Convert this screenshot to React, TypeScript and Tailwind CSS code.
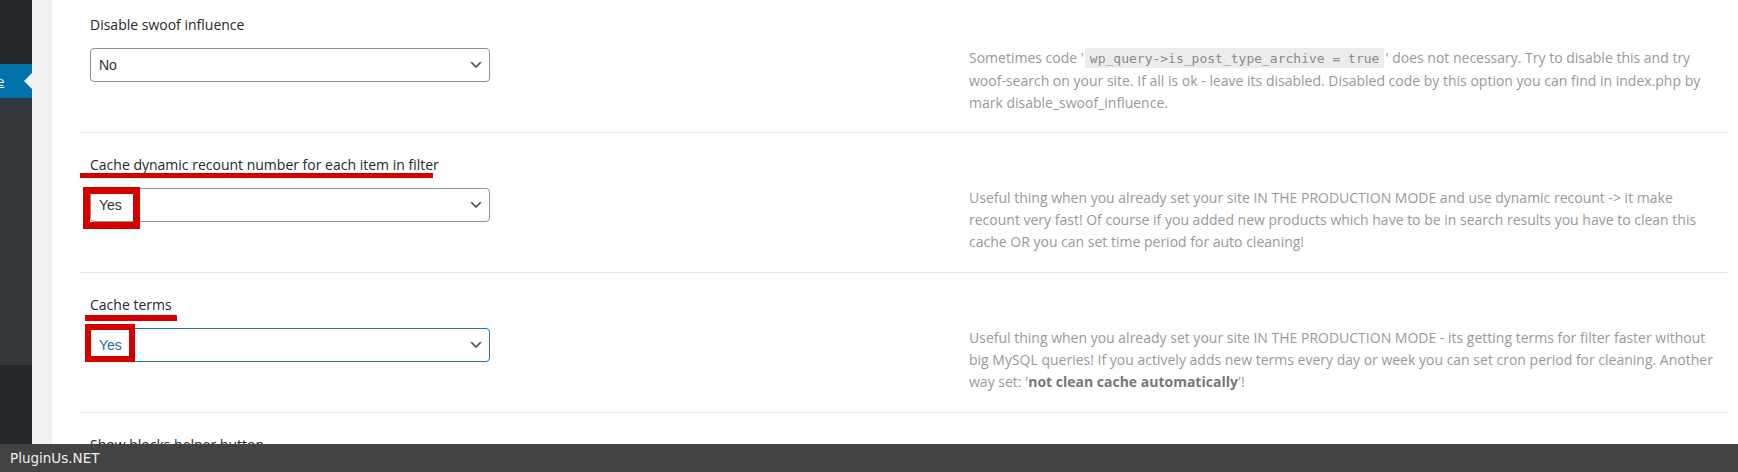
import React from 'react';

const Chevron = () => (
    <svg viewBox="0 0 20 20" className="absolute right-[5px] top-1/2 h-4 w-4 -translate-y-1/2" fill="#50575e">
        <path d="M5 6l5 5 5-5 2 1-7 7-7-7 2-1z" />
    </svg>
);

interface SelectProps {
    value: string;
    focused?: boolean;
}

const FakeSelect: React.FC<SelectProps> = ({ value, focused }) => (
    <div
        className={
            focused
                ? 'relative flex h-[34px] w-[400px] items-center rounded-[4px] border border-[#2271b1] bg-white pl-[8px] text-[14px] text-[#1f6ea8]'
                : 'relative flex h-[34px] w-[400px] items-center rounded-[4px] border border-[#8c8f94] bg-white pl-[8px] text-[14px] text-[#2c3338]'
        }
        style={{ fontFamily: '"Liberation Sans", Arial, sans-serif' }}
    >
        {value}
        <Chevron />
    </div>
);

interface RowProps {
    label: string;
    value: string;
    focused?: boolean;
    height?: string;
    children?: React.ReactNode;
    overlay?: React.ReactNode;
}

const Row: React.FC<RowProps> = ({ label, value, focused, height = 'h-[140px]', children, overlay }) => (
    <div className={`relative flex shrink-0 border-t border-[#e4e6e9] ${height}`}>
        <div className="w-[889px] shrink-0 pl-[10px] pt-[22px]">
            <div className="text-[14px] font-medium leading-[20px] text-[#23282d]">{label}</div>
            <div className="mt-[13px]">
                <FakeSelect value={value} focused={focused} />
            </div>
        </div>
        <div className="pt-[54px] text-[14px] leading-[22px] text-[#999999]">{children}</div>
        {overlay}
    </div>
);

export default function App() {
    return (
        <div
            className="relative flex h-[472px] w-[1738px] overflow-hidden bg-white"
            style={{ fontFamily: '"Open Sans", "Noto Sans", sans-serif' }}
        >
            {/* admin menu */}
            <div className="flex w-[32px] shrink-0 flex-col">
                <div className="h-[64px] bg-[#23282d]" />
                <div className="relative flex h-[34px] items-center overflow-hidden bg-[#0073aa]">
                    <span className="-ml-[3px] text-[13px] leading-none text-white underline">e</span>
                    <span className="absolute right-0 top-1/2 h-0 w-0 -translate-y-1/2 border-y-[8px] border-r-[8px] border-y-transparent border-r-[#f1f1f1]" />
                </div>
                <div className="h-[267px] bg-[#32373c]" />
                <div className="flex-1 bg-[#23282d]" />
            </div>
            <div className="w-[20px] shrink-0 bg-[#f1f1f1]" />

            {/* settings */}
            <div className="flex flex-1 flex-col pl-[28px] pr-[11px]">
                <div className="-mt-[8px] flex flex-col">
                    <Row label="Disable swoof influence" value="No">
                        <div className="whitespace-nowrap">
                            Sometimes code '
                            <code
                                className="mx-[1px] bg-[#ececec] px-[5px] pb-[2px] pt-[3px] text-[13px] text-[#8a8a8a]"
                                style={{ fontFamily: '"DejaVu Sans Mono", monospace' }}
                            >
                                wp_query-&gt;is_post_type_archive = true
                            </code>
                            ' does not necessary. Try to disable this and try
                            <br />
                            woof-search on your site. If all is ok - leave its disabled. Disabled code by this option you can find in index.php by
                            <br />
                            mark disable_swoof_influence.
                        </div>
                    </Row>

                    <Row
                        label="Cache dynamic recount number for each item in filter"
                        value="Yes"
                        overlay={
                            <>
                                <div className="absolute left-0 top-[40px] h-[5px] w-[353px] bg-[#d40000]" />
                                <div className="absolute left-[3px] top-[54px] h-[42px] w-[57px] border-[7px] border-[#d40000]" />
                            </>
                        }
                    >
                        <div className="whitespace-nowrap">
                            Useful thing when you already set your site IN THE PRODUCTION MODE and use dynamic recount -&gt; it make
                            <br />
                            recount very fast! Of course if you added new products which have to be in search results you have to clean this
                            <br />
                            cache OR you can set time period for auto cleaning!
                        </div>
                    </Row>

                    <Row
                        label="Cache terms"
                        value="Yes"
                        focused
                        overlay={
                            <>
                                <div className="absolute left-[5px] top-[42px] h-[6px] w-[92px] bg-[#d40000]" />
                                <div className="absolute left-[5px] top-[51px] h-[38px] w-[50px] border-[6px] border-[#d40000]" />
                            </>
                        }
                    >
                        <div className="whitespace-nowrap">
                            Useful thing when you already set your site IN THE PRODUCTION MODE - its getting terms for filter faster without
                            <br />
                            big MySQL queries! If you actively adds new terms every day or week you can set cron period for cleaning. Another
                            <br />
                            way set: '<b className="font-bold text-[#777777]">not clean cache automatically</b>'!
                        </div>
                    </Row>

                    <Row label="Show blocks helper button" value="No" />
                </div>
            </div>

            {/* bottom bar */}
            <div className="absolute bottom-0 left-0 flex h-[28px] w-full items-center bg-[#434343] pl-[10px]">
                <span
                    className="text-[13.5px] text-[#eeeeee]"
                    style={{ fontFamily: '"DejaVu Sans", sans-serif' }}
                >
                    PluginUs.NET
                </span>
            </div>
        </div>
    );
}
